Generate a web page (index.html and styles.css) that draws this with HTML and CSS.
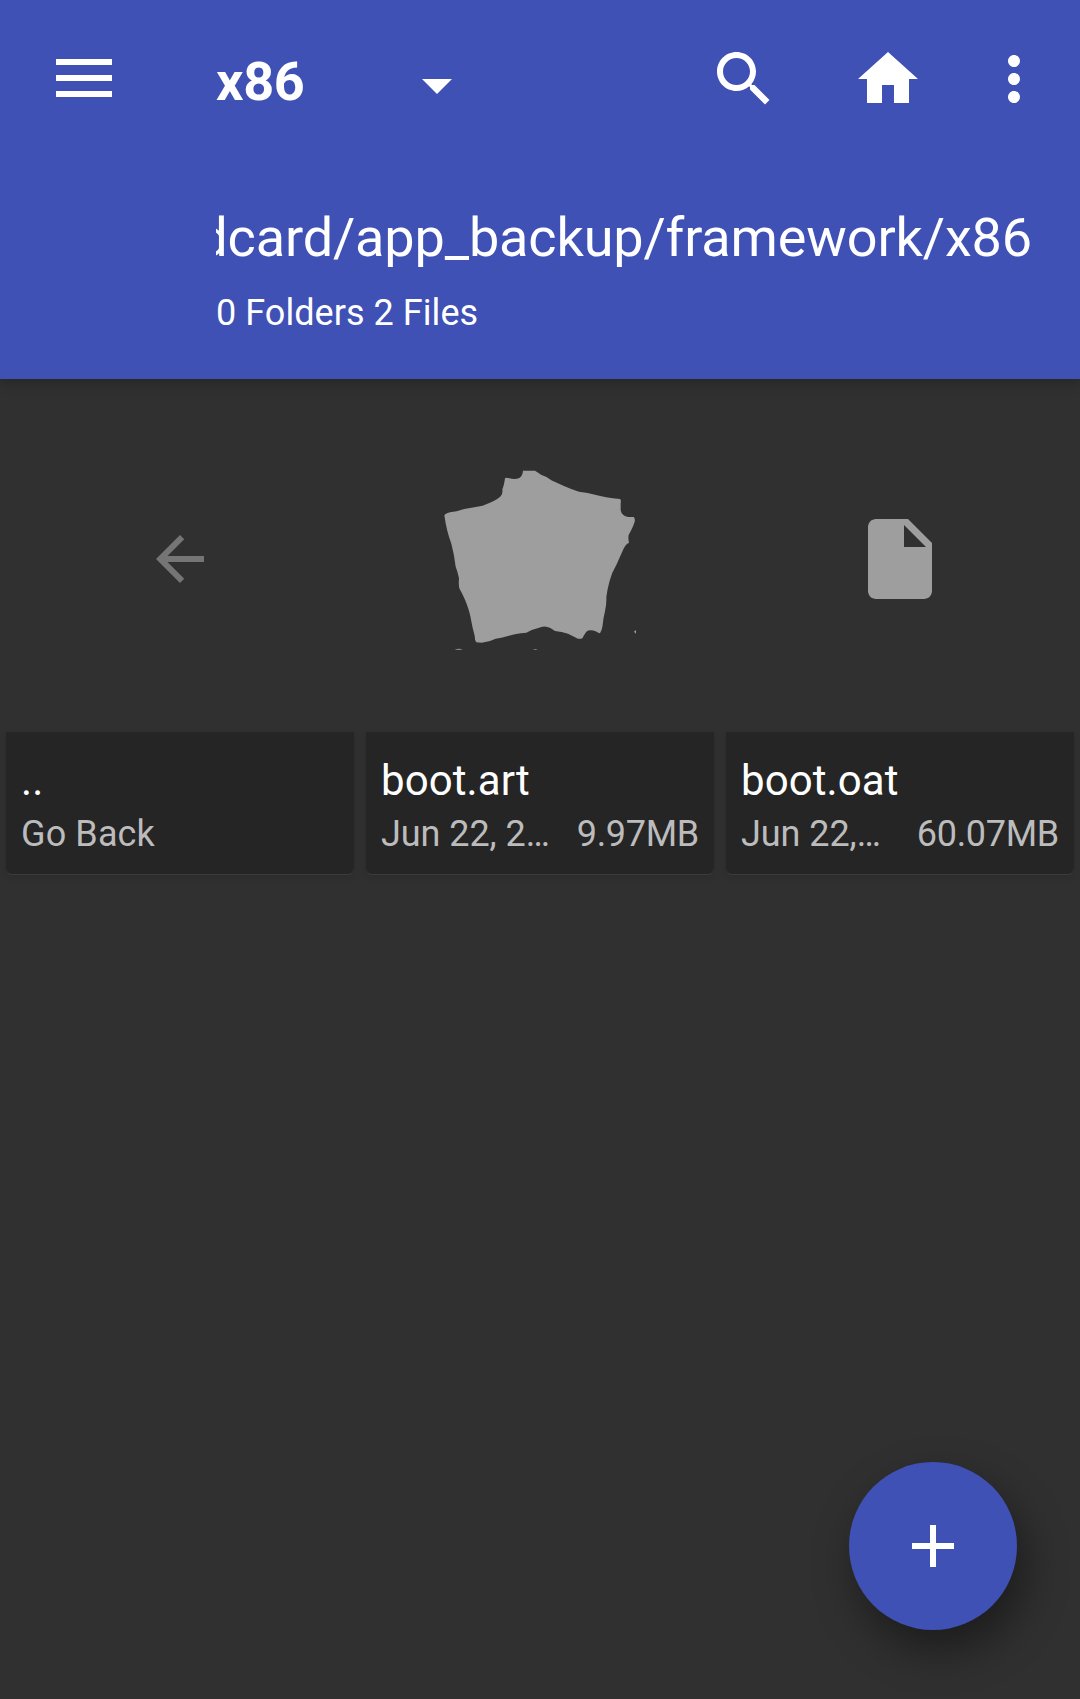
FILE: index.html
```html
<!DOCTYPE html>
<html lang="en">
<head>
<meta charset="utf-8">
<title>File manager</title>
<link rel="stylesheet" href="styles.css">
</head>
<body>
<header class="appbar">
  <div class="toolbar">
    <svg class="menu" viewBox="0 0 56 38" width="56" height="38"><path d="M0 0h56v6H0zM0 16h56v6H0zM0 32h56v6H0z"/></svg>
    <h1 class="title">x86</h1>
    <svg class="caret" viewBox="0 0 30 15" width="30" height="15"><path d="M0 0h30L15 15z"/></svg>
    <svg class="action search" viewBox="0 0 24 24"><path d="M15.5 14h-.79l-.28-.27C15.41 12.59 16 11.11 16 9.5 16 5.91 13.09 3 9.5 3S3 5.91 3 9.5 5.91 16 9.5 16c1.61 0 3.09-.59 4.23-1.57l.27.28v.79l5 4.99L20.49 19l-4.99-5zm-6 0C7.01 14 5 11.99 5 9.5S7.01 5 9.5 5 14 7.01 14 9.5 11.99 14 9.5 14z"/></svg>
    <svg class="action home" viewBox="0 0 24 24"><path d="M10 20v-6h4v6h5v-8h3L12 3 2 12h3v8z"/></svg>
    <svg class="action more" viewBox="0 0 24 24"><path d="M12 8c1.100 0 2-.9 2-2s-.9-2-2-2-2 .9-2 2 .9 2 2 2zm0 2c-1.100 0-2 .9-2 2s.9 2 2 2 2-.9 2-2-.9-2-2-2zm0 6c-1.100 0-2 .9-2 2s.9 2 2 2 2-.9 2-2-.9-2-2-2z"/></svg>
  </div>
  <div class="location">
    <div class="path"><span>dcard/app_backup/framework/x86</span></div>
    <div class="counts">0 Folders 2 Files</div>
  </div>
</header>
<main class="grid">
  <article class="item">
    <div class="thumb"><svg class="back" viewBox="0 0 24 24" width="72" height="72"><path d="M20 11H7.83l5.59-5.59L12 4l-8 8 8 8 1.410-1.410L7.830 13H20v-2z"/></svg></div>
    <div class="card">
      <div class="name">..</div>
      <div class="info"><span>Go Back</span></div>
    </div>
  </article>
  <article class="item">
    <div class="thumb"><svg class="preview" viewBox="42 24 576 576" width="192" height="192"><path d="M43 180 Q50 174 60 172L80 169Q100 162 120 159L158 152Q198 138 212 124Q219 117 217 103Q222 92 225 70Q228 67 238 70Q256 75 268 69Q278 62 279 47H315Q325 53 333 59Q348 63 364 76L400 92Q425 103 447 110Q475 113 495 119Q525 127 570 132Q574 134 572 145V166Q575 183 595 186H611Q616 190 614 200Q609 216 596 240Q594 250 597 263Q586 268 580 283L560 328Q545 354 539 377Q532 402 529 426Q530 447 525 469Q520 490 519 502Q517 524 510 535Q504 534 500 530Q479 522 469 530Q461 541 457 550Q448 554 438 548L414 536Q395 530 375 528L361 519Q343 510 325 519Q303 524 289 533Q255 536 234 543Q213 549 197 551Q178 561 155 563L139 562Q134 556 134 542Q127 518 121 484Q117 463 105 434Q97 416 89 402Q85 393 87 370Q83 350 77 335Q73 300 64 266Q49 226 43 180Z"/><path d="M74 584q14-6 24 0zM309 584q7-4 14 0zM612 530q4-6 8-4v12z"/></svg></div>
    <div class="card">
      <div class="name">boot.art</div>
      <div class="info"><span class="date">Jun 22, 2…</span><span class="size">9.97MB</span></div>
    </div>
  </article>
  <article class="item">
    <div class="thumb"><svg viewBox="0 0 24 24" width="96" height="96"><path d="M6 2c-1.100 0-2 .9-2 2v16c0 1.100.9 2 2 2h12c1.100 0 2-.9 2-2V8l-6-6H6zm7 7V3.500L18.500 9H13z"/></svg></div>
    <div class="card">
      <div class="name">boot.oat</div>
      <div class="info"><span class="date">Jun 22,…</span><span class="size">60.07MB</span></div>
    </div>
  </article>
</main>
<button class="fab" aria-label="Add"><svg viewBox="0 0 42 42" width="42" height="42"><path d="M18 0h6v18h18v6H24v18h-6V24H0v-6h18z"/></svg></button>
</body>
</html>
```
FILE: styles.css
```css
* { box-sizing: border-box; }
body {
  margin: 0;
  min-height: 1699px;
  background: #303030;
  color: #fff;
  font-family: Roboto, sans-serif;
}
svg { display: block; flex: none; fill: currentColor; }

.appbar {
  height: 379px;
  background: #3f51b5;
  box-shadow: 0 2px 12px rgba(0, 0, 0, .28);
}
.toolbar { display: flex; align-items: flex-start; height: 206px; }
.menu { margin: 59px 0 0 56px; }
.title {
  width: 206px;
  margin: 50px 0 0 104px;
  font-size: 54px;
  line-height: 64px;
  font-weight: 700;
  letter-spacing: -.3px;
}
.caret { margin-top: 79px; }
.action { width: 72px; height: 72px; margin-top: 43px; }
.search { margin-left: 256px; }
.home { margin-left: 72px; }
.more { margin-left: 54px; }
.location { padding: 0 48px 0 216px; }
.path {
  display: flex;
  justify-content: flex-end;
  overflow: hidden;
  font-size: 54px;
  line-height: 64px;
  letter-spacing: -.14px;
  white-space: nowrap;
}
.counts {
  margin-top: 22px;
  font-size: 36px;
  line-height: 42px;
  letter-spacing: .05px;
}

.grid { display: grid; grid-template-columns: repeat(3, 360px); }
.item { padding: 7px 6px 0; }
.thumb {
  display: flex;
  align-items: center;
  justify-content: center;
  height: 346px;
  color: #9e9e9e;
}
.back { color: #757575; }
.card {
  height: 142px;
  padding: 24px 15px 0;
  border-radius: 0 0 6px 6px;
  background: #252525;
  box-shadow: 0 1px 0 #3c3c3c, 0 3px 6px rgba(0, 0, 0, .12);
}
.name { font-size: 42px; line-height: 49px; letter-spacing: .08px; }
.info {
  display: flex;
  justify-content: space-between;
  margin-top: 8px;
  color: #bcbcbc;
  font-size: 36px;
  line-height: 42px;
  letter-spacing: .12px;
  white-space: nowrap;
}
.date { letter-spacing: -.06px; }
.size { letter-spacing: -.3px; }

.fab {
  position: fixed;
  left: 849px;
  top: 1462px;
  display: flex;
  align-items: center;
  justify-content: center;
  width: 168px;
  height: 168px;
  padding: 0;
  border: 0;
  border-radius: 50%;
  background: #3f51b5;
  color: #fff;
  box-shadow: 8px 20px 44px rgba(0, 0, 0, .42);
}
```
